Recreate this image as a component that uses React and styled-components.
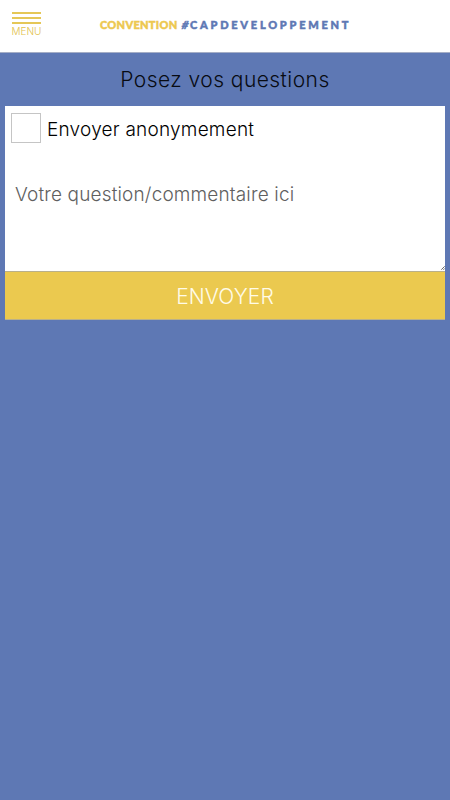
import styled, { createGlobalStyle } from "styled-components";

const App = () => {
  return (
    <Page>
      <GlobalStyle />
      <Header>
        <MenuButton aria-label="Menu">
          <Bar />
          <Bar />
          <Bar />
          <MenuLabel>MENU</MenuLabel>
        </MenuButton>
        <Brand>
          <BrandEvent>CONVENTION</BrandEvent>
          <Hash>#</Hash>
          <BrandWord>CAPDEVELOPPEMENT</BrandWord>
        </Brand>
      </Header>
      <Title>Posez vos questions</Title>
      <Form>
        <Anonymous>
          <Checkbox type="checkbox" />
          <AnonymousText>Envoyer anonymement</AnonymousText>
        </Anonymous>
        <QuestionBox>
          <Question placeholder="Votre question/commentaire ici" />
          <Grip width="4" height="4" viewBox="0 0 4 4">
            <path d="M0.3 3.7L3.7 0.3M2.4 3.8L3.8 2.4" />
          </Grip>
        </QuestionBox>
        <Send type="button">ENVOYER</Send>
      </Form>
    </Page>
  );
};

const GlobalStyle = createGlobalStyle`
  * {
    box-sizing: border-box;
  }

  body {
    margin: 0;
    background: #5e78b4;
    font-family: Inter, "Liberation Sans", sans-serif;
  }
`;

const Page = styled.div`
  min-height: 100vh;
  background: #5e78b4;
  overflow: hidden;
`;

const Header = styled.header`
  display: flex;
  align-items: flex-start;
  height: 53px;
  background: #fff;
  border-bottom: 1px solid #a5aec6;
`;

const MenuButton = styled.button`
  display: flex;
  flex-direction: column;
  align-items: center;
  gap: 3px;
  width: 53px;
  margin: 0;
  padding: 12px 0 0;
  border: 0;
  background: none;
  font-family: inherit;
`;

const Bar = styled.span`
  width: 29px;
  height: 2px;
  background: #e5c757;
`;

const MenuLabel = styled.span`
  margin-top: -2px;
  color: #e2c14a;
  font-size: 10px;
  font-weight: 300;
  line-height: 12px;
`;

// logo

const Brand = styled.div`
  display: flex;
  align-items: center;
  height: 14px;
  margin: 18px 0 0 47px;
  font-family: Lato, sans-serif;
  font-size: 11px;
  font-weight: 900;
  line-height: 14px;
  white-space: nowrap;
  -webkit-text-stroke: 0.5px currentColor;
`;

const BrandEvent = styled.span`
  width: 82px;
  color: #edc850;
  letter-spacing: 0.3px;
`;

const Hash = styled.span`
  width: 8px;
  color: #5e78b4;
  transform: skewX(-14deg);
`;

const BrandWord = styled.span`
  color: #5e78b4;
  letter-spacing: 2.76px;
`;

const Title = styled.h1`
  height: 53px;
  margin: 0;
  color: #080b12;
  font-size: 21px;
  font-weight: 300;
  line-height: 53px;
  letter-spacing: 0.45px;
  text-align: center;
`;

const Form = styled.form`
  margin: 0 5px;
  background: #fff;
`;

const Anonymous = styled.label`
  display: flex;
  align-items: center;
  gap: 6px;
  height: 71px;
  padding: 0 6px 27px;
  color: #000;
  font-size: 19px;
  font-weight: 300;
  line-height: 24px;
  letter-spacing: 0.22px;
`;

const AnonymousText = styled.span`
  padding-top: 3px;
`;

const Checkbox = styled.input`
  appearance: none;
  width: 30px;
  height: 30px;
  margin: 0;
  border: 1px solid #c5c5c5;
  background: #fff;
`;

const QuestionBox = styled.div`
  position: relative;
  height: 94px;
`;

const Question = styled.textarea`
  display: block;
  width: 100%;
  height: 94px;
  margin: 0;
  padding: 6px 10px;
  border: 0;
  outline: 0;
  resize: none;
  background: #fff;
  font-family: inherit;
  font-size: 19px;
  font-weight: 300;
  line-height: 24px;
  letter-spacing: 0.16px;

  &::placeholder {
    color: #606060;
    opacity: 1;
  }
`;

const Grip = styled.svg`
  position: absolute;
  right: 0;
  bottom: 1px;
  fill: none;
  stroke: #444;
  stroke-width: 0.8;
`;

const Send = styled.button`
  display: block;
  width: 100%;
  height: 49px;
  padding: 2px 0 0;
  border: 1px solid #b9b08a;
  border-width: 1px 0;
  border-radius: 0;
  background: #ebc94f;
  color: #fffbe8;
  font-family: inherit;
  font-size: 21px;
  font-weight: 300;
  line-height: 45px;
  letter-spacing: 0.1px;
`;

export default App;
